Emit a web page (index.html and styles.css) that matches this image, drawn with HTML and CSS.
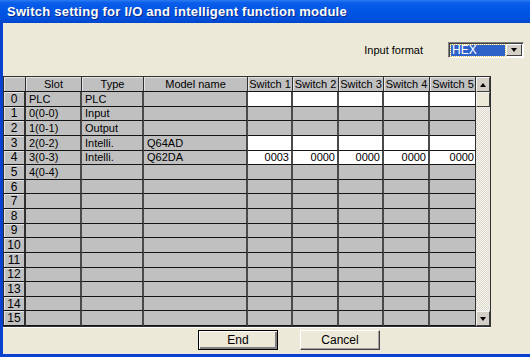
FILE: index.html
```html
<!DOCTYPE html>
<html lang="en">
<head>
    <meta charset="UTF-8">
    <title>Switch setting for I/O and intelligent function module</title>
    <link rel="stylesheet" href="styles.css">
</head>
<body>
    <div class="window">
        <div class="titlebar">Switch setting for I/O and intelligent function module</div>

        <div class="client">
            <div class="format-row">
                <span class="format-label">Input format</span>
                <div class="combo">
                    <span class="combo-value"><span class="combo-sel">HEX</span></span>
                    <span class="combo-btn"><span class="arrow-down"></span></span>
                </div>
            </div>

            <div class="grid-wrap">
                <div class="grid" id="grid">
                    <div class="cell head"></div>
                    <div class="cell head">Slot</div>
                    <div class="cell head">Type</div>
                    <div class="cell head">Model name</div>
                    <div class="cell head">Switch 1</div>
                    <div class="cell head">Switch 2</div>
                    <div class="cell head">Switch 3</div>
                    <div class="cell head">Switch 4</div>
                    <div class="cell head">Switch 5</div>
                </div>
                <div class="scrollbar">
                    <div class="sb-btn"><span class="arrow-up"></span></div>
                    <div class="sb-thumb"></div>
                    <div class="sb-track"></div>
                    <div class="sb-btn"><span class="arrow-down"></span></div>
                </div>
            </div>

            <div class="buttons">
                <button class="btn default">End</button>
                <button class="btn">Cancel</button>
            </div>
        </div>
    </div>

    <script>
        // slot rows: [slot, type, model, switches or null]
        const rows = [
            ['PLC', 'PLC', '', ['', '', '', '', '']],
            ['0(0-0)', 'Input', '', null],
            ['1(0-1)', 'Output', '', null],
            ['2(0-2)', 'Intelli.', 'Q64AD', ['', '', '', '', '']],
            ['3(0-3)', 'Intelli.', 'Q62DA', ['0003', '0000', '0000', '0000', '0000']],
            ['4(0-4)', '', '', null]
        ];

        function buildGrid() {
            const grid = document.getElementById('grid');
            for (let i = 0; i < 16; i++) {
                const row = rows[i] || ['', '', '', null];
                const cells = [];
                cells.push(['cell num', String(i)]);
                cells.push(['cell', row[0]]);
                cells.push(['cell', row[1]]);
                cells.push(['cell', row[2]]);
                for (let s = 0; s < 5; s++) {
                    if (row[3]) {
                        cells.push(['cell sw edit', row[3][s]]);
                    } else {
                        cells.push(['cell sw', '']);
                    }
                }
                cells.forEach(c => {
                    const div = document.createElement('div');
                    div.className = c[0];
                    div.textContent = c[1];
                    grid.appendChild(div);
                });
            }
        }

        buildGrid();
    </script>
</body>
</html>
```

FILE: styles.css
```css
* {
    margin: 0;
    padding: 0;
    box-sizing: border-box;
}

body {
    width: 530px;
    height: 357px;
    overflow: hidden;
    font-family: 'Liberation Sans', Arial, sans-serif;
    font-size: 11px;
    color: #000;
    background: #ece9d8;
}

.window {
    height: 357px;
    display: flex;
    flex-direction: column;
    border-left: 3px solid #0841d0;
    border-bottom: 3px solid #0841d0;
}

.titlebar {
    height: 23px;
    margin-left: -3px;
    padding: 4px 0 0 7px;
    background: linear-gradient(to bottom, #2a7cf2 0%, #0a5ee9 12%, #0055e5 50%, #004fdc 85%, #0044c8 100%);
    color: #fff;
    font-size: 13px;
    font-weight: bold;
    letter-spacing: 0.25px;
    text-shadow: 1px 1px 0 #0a2a8a;
}

.client {
    flex: 1;
    display: flex;
    flex-direction: column;
}

/* input format combo */
.format-row {
    display: flex;
    align-items: center;
    justify-content: flex-end;
    padding: 19px 6px 0 0;
    height: 35px;
}

.format-label {
    margin-right: 25px;
    font-size: 11px;
}

.combo {
    width: 76px;
    height: 16px;
    display: flex;
    background: #fff;
    border-top: 1px solid #808080;
    border-left: 1px solid #808080;
    border-right: 1px solid #fff;
    border-bottom: 1px solid #fff;
    box-shadow: inset 1px 1px 0 #404040;
}

.combo-value {
    flex: 1;
    padding: 2px 1px 1px 2px;
}

.combo-sel {
    display: block;
    height: 100%;
    background: #2f62c9;
    color: #fff;
    line-height: 11px;
    padding-left: 1px;
    outline: 1px dotted #d8c060;
    font-size: 12px;
}

.combo-btn {
    width: 16px;
    margin: 1px 1px 1px 0;
    background: #d4d0c8;
    border-top: 1px solid #fff;
    border-left: 1px solid #fff;
    border-right: 1px solid #404040;
    border-bottom: 1px solid #404040;
    display: flex;
    align-items: center;
    justify-content: center;
}

.arrow-down,
.arrow-up {
    width: 0;
    height: 0;
    border-left: 3.5px solid transparent;
    border-right: 3.5px solid transparent;
}

.arrow-down {
    border-top: 4px solid #000;
}

.arrow-up {
    border-bottom: 4px solid #000;
}

/* grid */
.grid-wrap {
    display: flex;
    width: 488px;
    height: 251px;
    margin-top: 18px;
    border: 1px solid #303030;
    box-shadow: 0 1px 0 #fff;
}

.grid {
    display: grid;
    grid-template-columns: 22px 56px 62px 104px 45px 46px 45px 46px 46px;
    grid-template-rows: 15px repeat(16, 1fr);
    width: 471px;
    background: #c0c0c0;
}

.cell {
    border-right: 2px solid #4a4a4a;
    border-bottom: 1px solid #141414;
    padding: 0 3px;
    white-space: nowrap;
    overflow: hidden;
    display: flex;
    align-items: center;
    background: #c0c0c0;
}

.cell.head {
    justify-content: center;
    padding: 0;
    box-shadow: inset 1px 1px 0 #e4e4e4;
    border-right-width: 1px;
    border-right-color: #303030;
    font-size: 11px;
}

.cell.num {
    justify-content: center;
    padding: 0;
    font-size: 12px;
    box-shadow: inset 1px 1px 0 #e4e4e4;
    border-right-color: #303030;
}

.cell.sw {
    justify-content: flex-end;
    padding: 0 2px;
    font-size: 11px;
}

.cell.edit {
    background: #fff;
}

.grid .cell:nth-child(9n) {
    border-right: none;
}

/* scrollbar */
.scrollbar {
    width: 15px;
    display: flex;
    flex-direction: column;
    border-left: 1px solid #303030;
}

.sb-btn,
.sb-thumb {
    height: 15px;
    background: #d4d0c8;
    border-top: 1px solid #f4f4f4;
    border-left: 1px solid #f4f4f4;
    border-right: 1px solid #404040;
    border-bottom: 1px solid #404040;
    display: flex;
    align-items: center;
    justify-content: center;
}

.sb-thumb {
    background: #ece9d8;
}

.sb-track {
    flex: 1;
    background: repeating-conic-gradient(#f7f6f1 0% 25%, #dcd9cc 0% 50%) 0 0 / 2px 2px;
}

/* buttons */
.buttons {
    display: flex;
    gap: 22px;
    padding: 3px 0 0 195px;
}

.btn {
    width: 80px;
    height: 20px;
    font-family: 'Liberation Sans', Arial, sans-serif;
    font-size: 12px;
    background: #ece9d8;
    border-top: 1px solid #fff;
    border-left: 1px solid #fff;
    border-right: 1px solid #404040;
    border-bottom: 1px solid #404040;
    box-shadow: inset -1px -1px 0 #a0a0a0;
    color: #000;
}

.btn.default {
    border: 1px solid #000;
    box-shadow: inset 1px 1px 0 #fff, inset -2px -2px 0 #808080;
}
```
